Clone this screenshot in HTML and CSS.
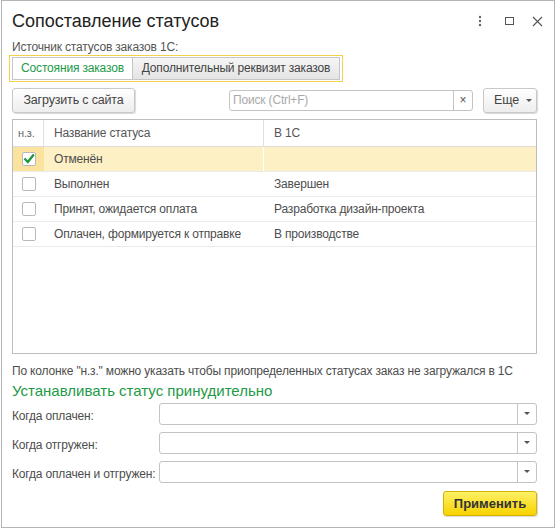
FILE: index.html
```html
<!DOCTYPE html>
<html>
<head>
	<meta charset="utf-8">
	<title>Сопоставление статусов</title>
	<link rel="stylesheet" href="styles.css">
</head>
<body>
	<div class="window">
		<div class="titlebar">
			<div class="title">Сопоставление статусов</div>
			<div class="win-icons">
				<svg class="win-icon dots" width="6" height="12" viewBox="0 0 6 12">
					<circle cx="3" cy="2" r="1.2" fill="#666"/>
					<circle cx="3" cy="6" r="1.2" fill="#666"/>
					<circle cx="3" cy="10" r="1.2" fill="#666"/>
				</svg>
				<svg class="win-icon maxi" width="10" height="10" viewBox="0 0 10 10">
					<rect x="1.5" y="1.5" width="8" height="7" fill="none" stroke="#555" stroke-width="1"/>
				</svg>
				<svg class="win-icon close" width="11" height="11" viewBox="0 0 11 11">
					<path d="M1 1 L10 10 M10 1 L1 10" stroke="#555" stroke-width="1.1"/>
				</svg>
			</div>
		</div>

		<div class="label">Источник статусов заказов 1С:</div>
		<div class="tabs">
			<div class="tab tab-active">Состояния заказов</div>
			<div class="tab tab-extra">Дополнительный реквизит заказов</div>
		</div>

		<div class="toolbar">
			<div class="btn btn-load">Загрузить с сайта</div>
			<div class="spacer"></div>
			<div class="search">
				<div class="search-input">Поиск (Ctrl+F)</div>
				<div class="search-clear">×</div>
			</div>
			<div class="btn btn-more">Еще<span class="caret"></span></div>
		</div>

		<div class="grid">
			<div class="row head">
				<div class="cell c1">н.з.</div>
				<div class="cell c2">Название статуса</div>
				<div class="cell c3">В 1С</div>
			</div>
			<div class="row current">
				<div class="cell c1"><span class="check checked"><svg width="12" height="12" viewBox="0 0 12 12"><path d="M1.5 5.5 L4.8 9 L10.8 1.5" fill="none" stroke="#1a9a3a" stroke-width="2.3"/></svg></span></div>
				<div class="cell c2">Отменён</div>
				<div class="cell c3"></div>
			</div>
			<div class="row">
				<div class="cell c1"><span class="check"></span></div>
				<div class="cell c2">Выполнен</div>
				<div class="cell c3">Завершен</div>
			</div>
			<div class="row">
				<div class="cell c1"><span class="check"></span></div>
				<div class="cell c2">Принят, ожидается оплата</div>
				<div class="cell c3">Разработка дизайн-проекта</div>
			</div>
			<div class="row">
				<div class="cell c1"><span class="check"></span></div>
				<div class="cell c2">Оплачен, формируется к отправке</div>
				<div class="cell c3">В производстве</div>
			</div>
		</div>

		<div class="note">По колонке "н.з." можно указать чтобы приопределенных статусах заказ не загружался в 1С</div>
		<div class="heading">Устанавливать статус принудительно</div>

		<div class="field">
			<div class="field-label">Когда оплачен:</div>
			<div class="select"><div class="select-btn"><span class="caret"></span></div></div>
		</div>
		<div class="field">
			<div class="field-label">Когда отгружен:</div>
			<div class="select"><div class="select-btn"><span class="caret"></span></div></div>
		</div>
		<div class="field">
			<div class="field-label">Когда оплачен и отгружен:</div>
			<div class="select"><div class="select-btn"><span class="caret"></span></div></div>
		</div>

		<div class="footer">
			<div class="btn btn-apply">Применить</div>
		</div>
	</div>
</body>
</html>
```

FILE: styles.css
```css
body {
	margin: 0;
	background: #fff;
	font-family: "Liberation Sans", Arial, sans-serif;
	font-size: 12px;
	letter-spacing: -0.17px;
	color: #4d4d4d;
}
.window {
	box-sizing: border-box;
	margin-left: 1px;
	width: 554px;
	height: 528px;
	border: 1px solid #b4b4b4;
	padding: 0 17px 0 10px;
}
.titlebar {
	display: flex;
	align-items: center;
	height: 39px;
}
.title {
	flex: 1;
	font-size: 18px;
	letter-spacing: 0;
	color: #222;
	padding-top: 2px;
}
.win-icons {
	display: flex;
	align-items: center;
	margin-right: -6px;
	padding-top: 1px;
}
.win-icon {
	display: block;
}
.maxi {
	margin-left: 21px;
}
.close {
	margin-left: 18px;
}
.label {
	line-height: 15px;
	color: #555;
}
.tabs {
	display: inline-flex;
	margin-left: -3px;
	padding: 1px 2px;
	border: 1px solid #f3d24a;
}
.tab {
	box-sizing: border-box;
	height: 23px;
	line-height: 21px;
	text-align: center;
	border: 1px solid #c6c6c6;
	background: linear-gradient(#f6f6f6, #e4e4e4);
	color: #444;
	font-size: 12px;
	white-space: nowrap;
}
.tab-active {
	width: 121px;
	background: #fff;
	color: #1b9a4a;
}
.tab-extra {
	width: 207px;
	border-left: none;
}
.toolbar {
	display: flex;
	align-items: center;
	margin-top: 6px;
	height: 25px;
}
.spacer {
	flex: 1;
}
.btn {
	box-sizing: border-box;
	height: 25px;
	line-height: 23px;
	padding: 0 12px;
	border: 1px solid #c8c8c8;
	border-radius: 3px;
	background: linear-gradient(#ffffff, #ededed);
	box-shadow: 1px 1px 1px rgba(0, 0, 0, 0.15);
	color: #444;
	font-size: 12.5px;
	white-space: nowrap;
}
.btn-load {
	width: 123px;
	padding: 0;
	text-align: center;
}
.btn-more {
	width: 54px;
	margin-left: 10px;
	padding: 0 0 0 10px;
}
.caret {
	display: inline-block;
	width: 0;
	height: 0;
	vertical-align: middle;
	border-left: 3px solid transparent;
	border-right: 3px solid transparent;
	border-top: 3px solid #555;
}
.btn-more .caret {
	margin-left: 7px;
}
.search {
	display: flex;
	box-sizing: border-box;
	width: 244px;
	height: 21px;
	border: 1px solid #c4c4c4;
	border-radius: 3px;
	background: #fff;
}
.search-input {
	flex: 1;
	line-height: 19px;
	padding-left: 3px;
	color: #a9a9a9;
}
.search-clear {
	width: 18px;
	line-height: 19px;
	text-align: center;
	border-left: 1px solid #c4c4c4;
	color: #555;
	font-size: 12px;
}
.grid {
	box-sizing: border-box;
	margin-top: 6px;
	height: 235px;
	border: 1px solid #bdbdbd;
}
.row {
	display: flex;
	height: 24px;
	border-bottom: 1px solid #ebebeb;
}
.row.head {
	height: 26px;
	border-bottom: 1px solid #dcdcdc;
}
.cell {
	box-sizing: border-box;
	display: flex;
	align-items: center;
	padding-left: 10px;
	white-space: nowrap;
}
.c1 {
	width: 31px;
	padding-left: 9px;
}
.c2 {
	width: 220px;
}
.c3 {
	flex: 1;
}
.head .cell {
	color: #555;
}
.head .c1 {
	padding-left: 5px;
	font-size: 11px;
	color: #666;
}
.head .c1, .head .c2 {
	border-right: 1px solid #e0e0e0;
}
.current {
	background: #fdf0c5;
}
.current .c1 {
	background: #fbe29f;
}
.current .c2 {
	border-right: 1px solid #fff;
}
.check {
	box-sizing: border-box;
	display: block;
	width: 14px;
	height: 14px;
	border: 1px solid #b9b9b9;
	border-radius: 2px;
	background: #fff;
}
.check svg {
	display: block;
}
.note {
	margin-top: 10px;
	line-height: 15px;
}
.heading {
	margin-top: 3px;
	font-size: 15px;
	letter-spacing: 0;
	line-height: 17px;
	color: #1d9a46;
}
.field {
	display: flex;
	align-items: center;
	height: 29px;
}
.field-label {
	width: 147px;
	padding-top: 5px;
	white-space: nowrap;
}
.select {
	flex: 1;
	display: flex;
	justify-content: flex-end;
	box-sizing: border-box;
	height: 22px;
	border: 1px solid #c4c4c4;
	border-radius: 3px;
	background: #fff;
}
.select-btn {
	width: 18px;
	display: flex;
	align-items: center;
	justify-content: center;
	border-left: 1px solid #c4c4c4;
}
.footer {
	display: flex;
	justify-content: flex-end;
	margin-top: 5px;
}
.btn-apply {
	height: 25px;
	line-height: 23px;
	width: 94px;
	padding: 0;
	text-align: center;
	font-weight: bold;
	font-size: 13px;
	letter-spacing: 0;
	color: #333;
	border-color: #d2b400;
	background: linear-gradient(#fff066, #f7d300);
}
```
